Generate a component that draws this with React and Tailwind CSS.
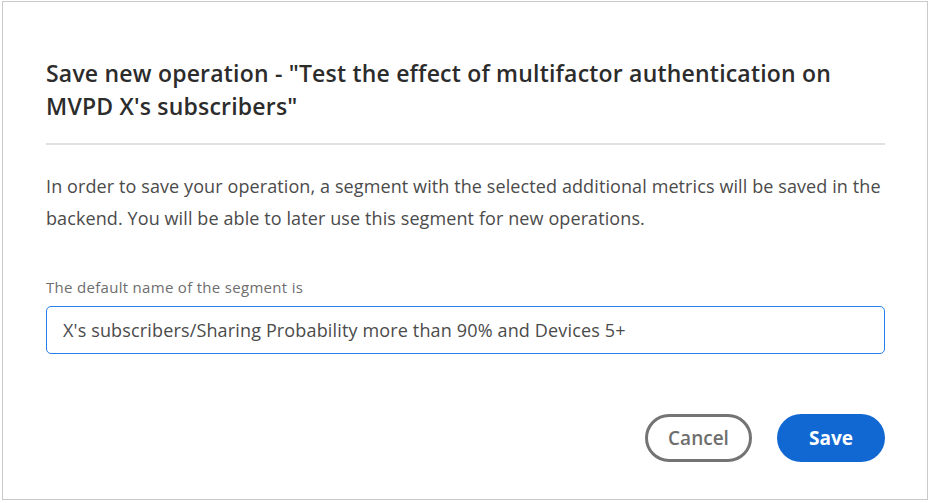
export default function App() {
  return (
    <div className="w-[930px] h-[503px] bg-white font-['Open_Sans',sans-serif]">
      <div className="ml-[2px] mt-[1px] w-[926px] h-[499px] border border-[#cacaca] flex flex-col pl-[43px] pr-[42px]">
        <h2 className="mt-[55px] text-[23px] leading-[33px] font-semibold text-[#2c2c2c] tracking-[0.2px]">
          Save new operation - "Test the effect of multifactor authentication on MVPD X's subscribers"
        </h2>
        <div className="mt-[20px] h-[2px] bg-[#e1e1e1]" />
        <p className="mt-[25px] text-[18px] leading-[32px] text-[#4b4b4b] tracking-[0.1px]">
          In order to save your operation, a segment with the selected additional metrics will be saved in the backend. You will be able to later use this segment for new operations.
        </p>
        <label className="mt-[43px] text-[15px] leading-[20px] text-[#6e6e6e] tracking-[0.3px]">The default name of the segment is</label>
        <div className="mt-[9px] h-[48px] border border-[#2680eb] rounded-[5px] flex items-center px-[16px] text-[18px] text-[#4b4b4b] tracking-[0.15px]">
          X's subscribers/Sharing Probability more than 90% and Devices 5+
        </div>
        <div className="mt-[60px] flex justify-end gap-[25px]">
          <button className="w-[107px] h-[48px] rounded-full border-[3px] border-[#747474] text-[19px] font-semibold text-[#6e6e6e]">Cancel</button>
          <button className="w-[108px] h-[48px] rounded-full bg-[#1268d3] text-[19px] font-bold text-white">Save</button>
        </div>
      </div>
    </div>
  )
}
